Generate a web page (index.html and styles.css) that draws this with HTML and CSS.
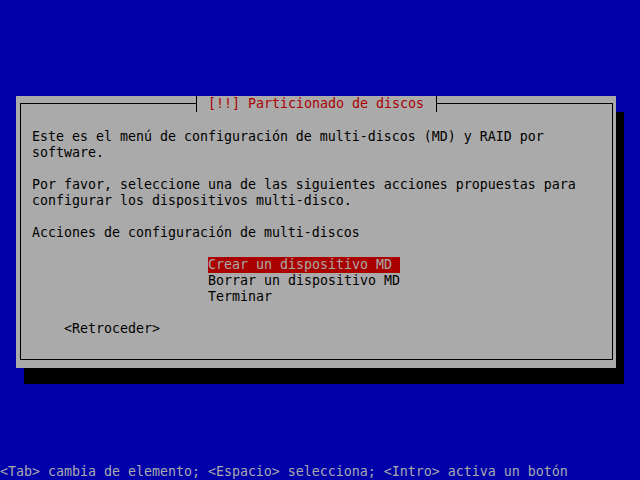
FILE: index.html
```html
<!DOCTYPE html>
<html lang="es">
<head>
  <meta charset="UTF-8" />
  <title>Particionado de discos</title>
  <link rel="stylesheet" href="styles.css">
</head>
<body>

  <div class="screen">
    <div class="dialog">
      <div class="frame">
        <div class="title">
          <span class="tee tee-left"></span><span class="title-text"> [!!] Particionado de discos </span><span class="tee tee-right"></span>
        </div>

        <div class="content">
          <p>Este es el menú de configuración de multi-discos (MD) y RAID por<br>software.</p>
          <p>Por favor, seleccione una de las siguientes acciones propuestas para<br>configurar los dispositivos multi-disco.</p>
          <p>Acciones de configuración de multi-discos</p>

          <ul class="menu">
            <li class="selected">Crear un dispositivo MD </li>
            <li>Borrar un dispositivo MD</li>
            <li>Terminar</li>
          </ul>

          <div class="back">&lt;Retroceder&gt;</div>
        </div>
      </div>
    </div>

    <div class="help">&lt;Tab&gt; cambia de elemento; &lt;Espacio&gt; selecciona; &lt;Intro&gt; activa un botón</div>
  </div>

</body>
</html>
```

FILE: styles.css
```css
body {
  margin: 0;
  background: #0000aa;
  font-family: 'DejaVu Sans Mono', 'Liberation Mono', monospace;
  font-size: 13.29px;
  line-height: 16px;
  color: #000;
}

.screen {
  width: 640px;
  height: 480px;
  padding-top: 96px;
  box-sizing: border-box;
  display: flex;
  flex-direction: column;
}

.dialog {
  width: 600px;
  height: 272px;
  margin-left: 16px;
  padding: 7px 3px 0 4px;
  box-sizing: border-box;
  background: #aaaaaa;
  box-shadow: 8px 16px 0 #000;
}

.frame {
  position: relative;
  height: 257px;
  border: 1px solid #000;
  box-sizing: border-box;
}

/* title sits over the top border line */
.title {
  position: absolute;
  top: -8px;
  left: 171px;
  display: flex;
  height: 16px;
}

.title-text {
  background: #aaaaaa;
  color: #aa0000;
  white-space: pre;
}

.tee {
  width: 8px;
  height: 16px;
}

.tee-left {
  background: linear-gradient(to right, transparent 4px, #000 4px, #000 5px, #aaaaaa 5px);
}

.tee-right {
  background: linear-gradient(to right, #aaaaaa 4px, #000 4px, #000 5px, transparent 5px);
}

.content {
  padding: 25px 0 0 11px;
}

.content p {
  margin: 0 0 16px;
  white-space: nowrap;
}

.menu {
  list-style: none;
  margin: 16px 0;
  padding: 0 0 0 176px;
  display: flex;
  flex-direction: column;
  align-items: flex-start;
}

.menu li {
  white-space: pre;
}

.menu .selected {
  background: #aa0000;
  color: #aaaaaa;
}

.back {
  padding-left: 32px;
}

.help {
  margin-top: auto;
  color: #aaaaaa;
  white-space: pre;
  height: 16px;
}
```
